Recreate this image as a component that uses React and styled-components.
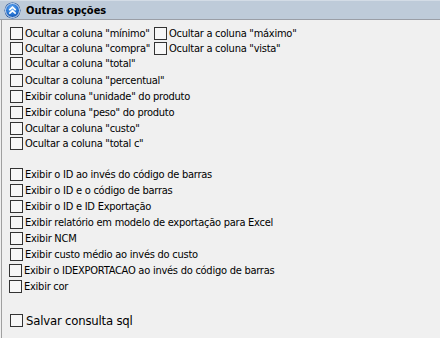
import React from 'react'
import styled, { createGlobalStyle } from 'styled-components'

const GlobalStyle = createGlobalStyle`
  html, body {
    margin: 0;
    padding: 0;
    background: #f0f0f0;
  }
  body {
    font-family: "DejaVu Sans", "Liberation Sans", sans-serif;
    font-stretch: condensed;
    color: #000;
  }
`

const colsA = [
    ['Ocultar a coluna "mínimo"', 'Ocultar a coluna "máximo"', 15],
    ['Ocultar a coluna "compra"', 'Ocultar a coluna "vista"', 14],
    ['Ocultar a coluna "total"', null, 17],
    ['Ocultar a coluna "percentual"', null, 17],
    ['Exibir coluna "unidade" do produto', null, 14],
    ['Exibir coluna "peso" do produto', null, 18],
    ['Ocultar a coluna "custo"', null, 15],
    ['Ocultar a coluna "total c"', null, 15],
]

const colsB = [
    ['Exibir o ID ao invés do código de barras', 0],
    ['Exibir o ID e o código de barras', 0],
    ['Exibir o ID e ID Exportação', 0],
    ['Exibir relatório em modelo de exportação para Excel', 0],
    ['Exibir NCM', 0],
    ['Exibir custo médio ao invés do custo', 0],
    ['Exibir o IDEXPORTACAO ao invés do código de barras', -1],
    ['Exibir cor', -1],
]

const CollapseIcon = () => (
    <svg width="17" height="17" viewBox="0 0 17 17">
        <defs>
            <radialGradient id="g" cx="45%" cy="35%" r="65%">
                <stop offset="0%" stopColor="#6fb2f5" />
                <stop offset="60%" stopColor="#2a78d6" />
                <stop offset="100%" stopColor="#1556b0" />
            </radialGradient>
        </defs>
        <circle cx="8.5" cy="8.5" r="8" fill="#1b4f9c" />
        <circle cx="8.5" cy="8.5" r="7" fill="url(#g)" stroke="#e8f1fb" strokeWidth="0.9" />
        <path d="M5.3 8.2 L8.5 5.2 L11.7 8.2" fill="none" stroke="#fff" strokeWidth="1.6" />
        <path d="M5.3 11.6 L8.5 8.6 L11.7 11.6" fill="none" stroke="#fff" strokeWidth="1.6" />
    </svg>
)

const Check = ({ label, shift = 0 }) => (
    <Item shift={shift}>
        <Box />
        <Label>{label}</Label>
    </Item>
)

const App = () => {
    return (
        <>
            <GlobalStyle />
            <Panel>
                <Header>
                    <IconWrap>
                        <CollapseIcon />
                    </IconWrap>
                    <Title>Outras opções</Title>
                </Header>
                <Body>
                    <Spacer h={6} />
                    {colsA.map(([a, b, h]) => (
                        <Row key={a} h={h}>
                            <Column>
                                <Check label={a} />
                            </Column>
                            {b && <Check label={b} />}
                        </Row>
                    ))}
                    <Spacer h={15} />
                    {colsB.map(([a, s]) => (
                        <Row key={a} h={16}>
                            <Check label={a} shift={s} />
                        </Row>
                    ))}
                    <Spacer h={17} />
                    <Row h={19}>
                        <Item>
                            <Box />
                            <BigLabel>Salvar consulta sql</BigLabel>
                        </Item>
                    </Row>
                </Body>
            </Panel>
        </>
    )
}

export default App

const Panel = styled.div`
    width: 440px;
    height: 338px;
    background: #f0f0f0;
    display: flex;
    flex-direction: column;
    overflow: hidden;
`
const Header = styled.div`
    height: 18px;
    flex: none;
    display: flex;
    align-items: center;
    gap: 4px;
    padding-left: 4px;
    background: #becbd9;
    border-top: 1px solid #d3dce6;
    border-bottom: 1px solid #9a9ea6;
`
const IconWrap = styled.div`
    width: 17px;
    height: 17px;
    display: flex;
`
const Title = styled.span`
    font-size: 11px;
    font-weight: bold;
    color: #000;
    margin-left: 1px;
`
const Body = styled.div`
    flex: 1;
    margin-left: 1px;
    border-left: 1px solid #a0a0a0;
    padding-left: 8px;
    display: flex;
    flex-direction: column;
`
const Spacer = styled.div`
    height: ${props => props.h}px;
    flex: none;
`
const Row = styled.div`
    height: ${props => props.h}px;
    flex: none;
    display: flex;
    align-items: center;
`
const Column = styled.div`
    width: 144px;
    flex: none;
    display: flex;
`
const Item = styled.label`
    display: flex;
    align-items: center;
    gap: 2px;
    margin-left: ${props => props.shift || 0}px;
    white-space: nowrap;
`
const Box = styled.span`
    width: 11px;
    height: 11px;
    flex: none;
    border: 1px solid #333;
    background: #f7f7f7;
`
const Label = styled.span`
    font-size: 11px;
    line-height: 13px;
    letter-spacing: -0.25px;
`
const BigLabel = styled.span`
    font-size: 13px;
    line-height: 16px;
    margin-left: 1px;
    letter-spacing: -0.2px;
`
